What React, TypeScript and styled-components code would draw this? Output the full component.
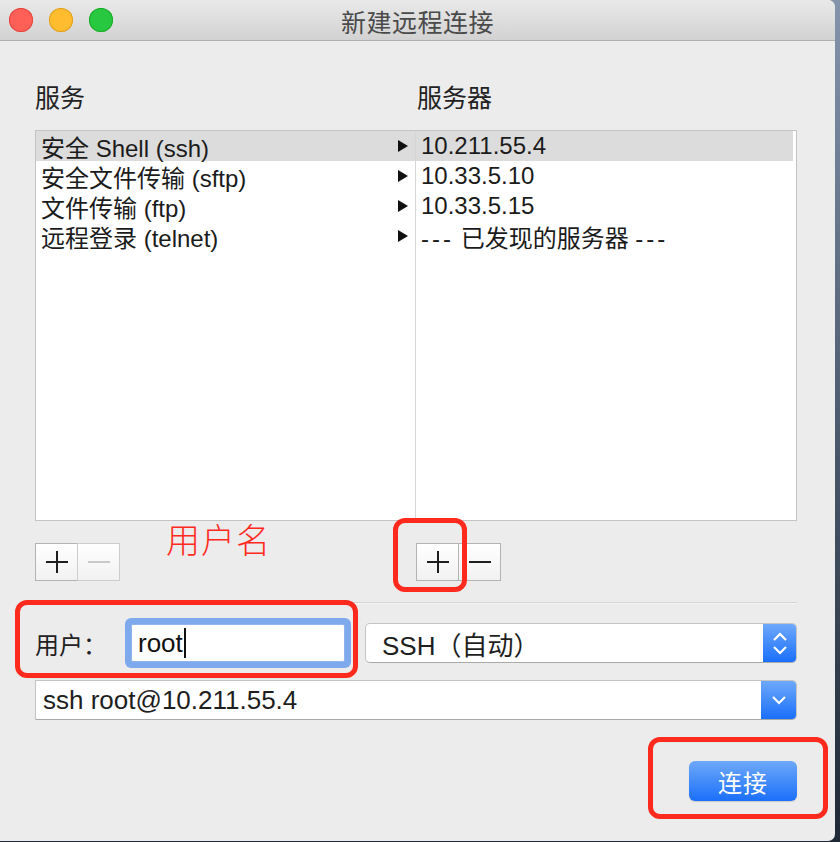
import React from 'react';
import styled, { createGlobalStyle } from 'styled-components';

const FONT = '"Liberation Sans", "Noto Sans CJK SC", sans-serif';

const GlobalStyle = createGlobalStyle`
  html, body {
    margin: 0;
    padding: 0;
  }
  body {
    width: 840px;
    height: 842px;
    overflow: hidden;
    background: linear-gradient(180deg, #8394ab 0%, #4d5b6e 50%, #1f2935 100%);
    font-family: ${FONT};
  }
`;

const Window = styled.div`
  position: relative;
  width: 835px;
  height: 841px;
  background: #ececec;
  border-radius: 0 7px 7px 0;
  overflow: hidden;
`;

const TitleBar = styled.div`
  height: 40px;
  display: grid;
  grid-template-columns: 1fr auto 1fr;
  align-items: center;
  background: linear-gradient(180deg, #e9e9e9 0%, #d2d2d2 100%);
  border-bottom: 1px solid #afafaf;
`;

const Lights = styled.div`
  display: flex;
  gap: 16px;
  padding-left: 9px;
`;

const Light = styled.span<{ $color: string; $edge: string }>`
  width: 24px;
  height: 24px;
  border-radius: 50%;
  background: ${(p) => p.$color};
  box-shadow: inset 0 0 0 1px ${(p) => p.$edge};
`;

const Title = styled.div`
  font-size: 25px;
  color: #4a4a4a;
  letter-spacing: 0.5px;
  padding-top: 2px;
`;

const Content = styled.div`
  padding: 42px 38px 0 35px;
`;

const Columns = styled.div`
  display: grid;
  grid-template-columns: 380px 1fr;
`;

const Heading = styled.div<{ $indent?: number }>`
  font-size: 25px;
  line-height: 30px;
  color: #222;
  padding-left: ${(p) => p.$indent ?? 0}px;
`;

const ListBox = styled(Columns)`
  margin-top: 17px;
  height: 389px;
  background: #fff;
  border: 1px solid #c4c4c4;
`;

const Pane = styled.div<{ $divider?: boolean }>`
  border-right: ${(p) => (p.$divider ? '1px solid #d6d6d6' : 'none')};
  padding-right: ${(p) => (p.$divider ? 0 : 3)}px;
`;

const Row = styled.div<{ $selected?: boolean; $pad: number }>`
  height: 30px;
  display: flex;
  align-items: center;
  justify-content: space-between;
  padding: 0 7px 0 ${(p) => p.$pad}px;
  font-size: 24px;
  color: #1b1b1b;
  background: ${(p) => (p.$selected ? '#dcdcdc' : 'transparent')};
  white-space: nowrap;
`;

const Dashes = styled.span`
  letter-spacing: 3px;
`;

const Arrow = styled.span`
  width: 0;
  height: 0;
  border-top: 6px solid transparent;
  border-bottom: 6px solid transparent;
  border-left: 10px solid #111;
`;

const ButtonsRow = styled(Columns)`
  margin-top: 22px;
`;

const SegGroup = styled.div<{ $indent?: number }>`
  display: flex;
  margin-left: ${(p) => p.$indent ?? 0}px;
`;

const SegButton = styled.button<{ $disabled?: boolean }>`
  width: 43px;
  height: 38px;
  padding: 0;
  display: flex;
  align-items: center;
  justify-content: center;
  background: linear-gradient(180deg, #ffffff 0%, #f1f1f1 100%);
  border: 1px solid ${(p) => (p.$disabled ? '#cdcdcd' : '#b3b3b3')};
  color: ${(p) => (p.$disabled ? '#c9c9c9' : '#1e1e1e')};
  & + & {
    margin-left: -1px;
  }
`;

const Separator = styled.div`
  margin-top: 21px;
  height: 1px;
  background: #d3d3d3;
  border-bottom: 1px solid #f6f6f6;
`;

const UserRow = styled.div`
  margin-top: 19px;
  display: flex;
  align-items: center;
  height: 40px;
`;

const Label = styled.span`
  font-size: 24px;
  color: #222;
  width: 96px;
`;

const TextInput = styled.div`
  width: 214px;
  height: 38px;
  display: flex;
  align-items: center;
  padding-left: 6px;
  box-sizing: border-box;
  background: #fff;
  border: 1px solid #8fb4ee;
  border-radius: 2px;
  box-shadow: 0 0 0 6px #7ea9ec;
  font-size: 26px;
  color: #111;
`;

const Caret = styled.span`
  width: 2px;
  height: 30px;
  background: #111;
  margin-left: 1px;
`;

const Select = styled.div<{ $square?: boolean }>`
  flex: 1;
  height: 40px;
  box-sizing: border-box;
  display: flex;
  align-items: stretch;
  background: #fff;
  border: 1px solid #c4c4c4;
  border-bottom-color: #a9a9a9;
  border-radius: ${(p) => (p.$square ? '0 5px 5px 0' : '5px')};
  overflow: hidden;
`;

const SelectText = styled.span<{ $pad: number }>`
  flex: 1;
  display: flex;
  align-items: center;
  padding-left: ${(p) => p.$pad}px;
  font-size: 26px;
  color: #1e1e1e;
`;

const BlueCap = styled.span<{ $w: number }>`
  width: ${(p) => p.$w}px;
  display: flex;
  flex-direction: column;
  align-items: center;
  justify-content: center;
  gap: 3px;
  background: linear-gradient(180deg, #6ea9fa 0%, #1a6ffb 100%);
`;

const StatusSelect = styled(Select)`
  margin-left: 20px;
`;

const CommandRow = styled.div`
  margin-top: 17px;
  display: flex;
  height: 39px;
`;

const Footer = styled.div`
  margin-top: 42px;
  display: flex;
  justify-content: flex-end;
`;

const ConnectButton = styled.button`
  width: 108px;
  height: 40px;
  border: none;
  border-radius: 6px;
  background: linear-gradient(180deg, #6ea9f9 0%, #1b6ffa 100%);
  box-shadow: 0 1px 1px rgba(0, 0, 0, 0.15);
  color: #fff;
  font-family: ${FONT};
  font-size: 24px;
  letter-spacing: 1px;
`;

const Mark = styled.div<{ $x: number; $y: number; $w: number; $h: number }>`
  position: absolute;
  left: ${(p) => p.$x}px;
  top: ${(p) => p.$y}px;
  width: ${(p) => p.$w}px;
  height: ${(p) => p.$h}px;
  box-sizing: border-box;
  border: 5px solid #ff2a1e;
  border-radius: 12px;
  pointer-events: none;
`;

const MarkText = styled.div`
  position: absolute;
  left: 166px;
  top: 520px;
  font-size: 34px;
  line-height: 42px;
  color: #ff2a1e;
  font-weight: 300;
  letter-spacing: 1px;
`;

const Plus = () => (
  <svg width="24" height="24" viewBox="0 0 24 24">
    <path d="M12 1v22M1 12h22" stroke="currentColor" strokeWidth="2" />
  </svg>
);

const Minus = () => (
  <svg width="24" height="24" viewBox="0 0 24 24">
    <path d="M1 12h22" stroke="currentColor" strokeWidth="2" />
  </svg>
);

const ChevronUp = () => (
  <svg width="16" height="10" viewBox="0 0 16 10">
    <path d="M2 8l6-6 6 6" fill="none" stroke="#fff" strokeWidth="2.2" />
  </svg>
);

const ChevronDown = () => (
  <svg width="16" height="10" viewBox="0 0 16 10">
    <path d="M2 2l6 6 6-6" fill="none" stroke="#fff" strokeWidth="2.2" />
  </svg>
);

const services = ['安全 Shell (ssh)', '安全文件传输 (sftp)', '文件传输 (ftp)', '远程登录 (telnet)'];
const servers = ['10.211.55.4', '10.33.5.10', '10.33.5.15'];

export default function App() {
  return (
    <>
      <GlobalStyle />
      <Window>
        <TitleBar>
          <Lights>
            <Light $color="#fe5f57" $edge="#e2463f" />
            <Light $color="#febc2e" $edge="#dfa023" />
            <Light $color="#28c840" $edge="#1aab29" />
          </Lights>
          <Title>新建远程连接</Title>
          <span />
        </TitleBar>

        <Content>
          <Columns>
            <Heading>服务</Heading>
            <Heading $indent={2}>服务器</Heading>
          </Columns>

          <ListBox>
            <Pane $divider>
              {services.map((s, i) => (
                <Row key={s} $selected={i === 0} $pad={5}>
                  {s}
                  <Arrow />
                </Row>
              ))}
            </Pane>
            <Pane>
              {servers.map((s, i) => (
                <Row key={s} $selected={i === 0} $pad={5}>
                  {s}
                </Row>
              ))}
              <Row $pad={5}>
                <span>
                  <Dashes>---</Dashes> 已发现的服务器 <Dashes>---</Dashes>
                </span>
              </Row>
            </Pane>
          </ListBox>

          <ButtonsRow>
            <SegGroup>
              <SegButton><Plus /></SegButton>
              <SegButton $disabled><Minus /></SegButton>
            </SegGroup>
            <SegGroup $indent={1}>
              <SegButton><Plus /></SegButton>
              <SegButton><Minus /></SegButton>
            </SegGroup>
          </ButtonsRow>

          <Separator />

          <UserRow>
            <Label>用户：</Label>
            <TextInput>
              root
              <Caret />
            </TextInput>
            <StatusSelect>
              <SelectText $pad={16}>SSH（自动）</SelectText>
              <BlueCap $w={33}>
                <ChevronUp />
                <ChevronDown />
              </BlueCap>
            </StatusSelect>
          </UserRow>

          <CommandRow>
            <Select $square>
              <SelectText $pad={7}>ssh root@10.211.55.4</SelectText>
              <BlueCap $w={35}>
                <ChevronDown />
              </BlueCap>
            </Select>
          </CommandRow>

          <Footer>
            <ConnectButton>连接</ConnectButton>
          </Footer>
        </Content>

        <MarkText>用户名</MarkText>
        <Mark $x={393} $y={518} $w={74} $h={74} />
        <Mark $x={15} $y={600} $w={343} $h={78} />
        <Mark $x={648} $y={737} $w={180} $h={82} />
      </Window>
    </>
  );
}
